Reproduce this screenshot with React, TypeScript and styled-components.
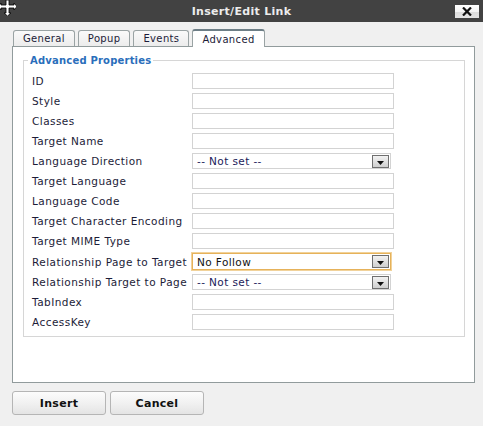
import React from "react";
import styled, { createGlobalStyle } from "styled-components";

const GlobalStyle = createGlobalStyle`
  html, body {
    margin: 0;
    padding: 0;
    background: #f0f0f0;
    font-family: "DejaVu Sans", Verdana, sans-serif;
  }
`;

const Window = styled.div`
  width: 483px;
  height: 426px;
  background: #f0f0f0;
  overflow: hidden;
`;

const TitleBar = styled.div`
  height: 22px;
  background: #424242;
  display: grid;
  grid-template-columns: 1fr auto 1fr;
  align-items: center;
`;

const MoveIcon = styled.div`
  display: flex;
  align-items: flex-start;
  height: 22px;
`;

const Title = styled.div`
  color: #ececec;
  font-weight: bold;
  font-size: 11px;
  letter-spacing: 0.3px;
`;

const CloseButton = styled.button`
  justify-self: end;
  margin-right: 4px;
  width: 24px;
  height: 13px;
  padding: 0;
  border: none;
  background: linear-gradient(#ffffff 0%, #f4f4f4 50%, #dcdcdc 51%, #e4e4e4 100%);
  display: flex;
  align-items: center;
  justify-content: center;
`;

const Body = styled.div`
  padding: 6px 8px 0 12px;
`;

const TabRow = styled.div`
  display: flex;
  align-items: flex-end;
  gap: 3px;
  padding-left: 1px;
  height: 18px;
`;

const Tab = styled.div<{ active?: boolean }>`
  height: ${(p) => (p.active ? "18px" : "16px")};
  padding: 0 9px;
  box-sizing: border-box;
  display: flex;
  align-items: center;
  font-size: 10px;
  letter-spacing: 0.35px;
  color: #1c1c38;
  background: ${(p) => (p.active ? "#ffffff" : "linear-gradient(#fafafa, #ececec)")};
  border: 1px solid #9aa3a4;
  border-bottom: none;
  border-top: ${(p) => (p.active ? "2px solid #6d7e86" : "1px solid #9aa3a4")};
  border-radius: 3px 3px 0 0;
  margin-bottom: ${(p) => (p.active ? "-1px" : "0")};
  position: relative;
`;

const Panel = styled.div`
  height: 337px;
  box-sizing: border-box;
  border: 1px solid #919b9c;
  background: #ffffff;
  padding: 8px 9px 0 10px;
`;

const Fieldset = styled.fieldset`
  margin: 0;
  padding: 7px 8px 6px 4px;
  border: 1px solid #d6d6d6;
`;

const Legend = styled.legend`
  padding: 0 2px;
  margin-left: 0;
  color: #2a6ebb;
  font-weight: bold;
  font-size: 10px;
  letter-spacing: 0.2px;
`;

const Rows = styled.div`
  display: grid;
  grid-template-columns: 160px 202px;
  row-gap: 4px;
  align-items: center;
  padding-left: 4px;
`;

const Label = styled.label`
  font-size: 10.5px;
  letter-spacing: 0.45px;
  color: #1c1c38;
  white-space: nowrap;
`;

const TextInput = styled.div`
  height: 16px;
  box-sizing: border-box;
  border: 1px solid #d3d3d3;
  background: #fff;
`;

const Select = styled.div<{ focused?: boolean }>`
  width: 199px;
  height: ${(p) => (p.focused ? "17px" : "16px")};
  box-sizing: border-box;
  border: 1px solid ${(p) => (p.focused ? "#e6b25a" : "#d3d3d3")};
  box-shadow: ${(p) => (p.focused ? "0 0 0 1px #f1d29a" : "none")};
  background: #fff;
  display: flex;
  align-items: center;
  justify-content: space-between;
  font-size: 10.5px;
  letter-spacing: 0.4px;
  padding-left: 4px;
`;

const SelectValue = styled.span<{ focused?: boolean }>`
  color: ${(p) => (p.focused ? "#111" : "#1a1a5a")};
`;

const Arrow = styled.div`
  width: 17px;
  height: 13px;
  box-sizing: border-box;
  border: 1px solid #6f6f6f;
  background: linear-gradient(#f2f2f2, #cfcfcf);
  display: flex;
  align-items: flex-end;
  justify-content: center;
  padding-bottom: 2px;
  margin-right: 1px;
`;

const ButtonRow = styled.div`
  display: flex;
  gap: 4px;
  margin-top: 8px;
`;

const Button = styled.button`
  width: 94px;
  height: 24px;
  border: 1px solid #b5b5b5;
  border-radius: 3px;
  background: linear-gradient(#fcfcfc 0%, #f1f1f1 50%, #e4e4e4 100%);
  font-family: "DejaVu Sans", Verdana, sans-serif;
  font-weight: bold;
  font-size: 11px;
  letter-spacing: 0.3px;
  color: #111;
  padding: 0;
`;

type Field = { label: string; kind: "text" | "select"; value?: string; focused?: boolean };

const fields: Field[] = [
  { label: "ID", kind: "text" },
  { label: "Style", kind: "text" },
  { label: "Classes", kind: "text" },
  { label: "Target Name", kind: "text" },
  { label: "Language Direction", kind: "select", value: "-- Not set --" },
  { label: "Target Language", kind: "text" },
  { label: "Language Code", kind: "text" },
  { label: "Target Character Encoding", kind: "text" },
  { label: "Target MIME Type", kind: "text" },
  { label: "Relationship Page to Target", kind: "select", value: "No Follow", focused: true },
  { label: "Relationship Target to Page", kind: "select", value: "-- Not set --" },
  { label: "TabIndex", kind: "text" },
  { label: "AccessKey", kind: "text" },
];

const tabs = ["General", "Popup", "Events", "Advanced"];

export default function App() {
  return (
    <Window>
      <GlobalStyle />
      <TitleBar>
        <MoveIcon>
          <svg width="16" height="16" viewBox="0 0 16 16">
            <path
              d="M6 0v5H1V3L-2 6.5 1 10V8h5v5H4l3.5 3L11 13H9V8h5v2l3-3.5L14 3v2H9V0z"
              fill="#fff"
              stroke="#000"
              strokeWidth="0.8"
            />
          </svg>
        </MoveIcon>
        <Title>Insert/Edit Link</Title>
        <CloseButton>
          <svg width="10" height="9" viewBox="0 0 10 9">
            <path d="M1 0.5l8 8M9 0.5l-8 8" stroke="#111" strokeWidth="2.2" />
          </svg>
        </CloseButton>
      </TitleBar>
      <Body>
        <TabRow>
          {tabs.map((t) => (
            <Tab key={t} active={t === "Advanced"}>
              {t}
            </Tab>
          ))}
        </TabRow>
        <Panel>
          <Fieldset>
            <Legend>Advanced Properties</Legend>
            <Rows>
              {fields.map((f) => (
                <React.Fragment key={f.label}>
                  <Label>{f.label}</Label>
                  {f.kind === "text" ? (
                    <TextInput />
                  ) : (
                    <Select focused={f.focused}>
                      <SelectValue focused={f.focused}>{f.value}</SelectValue>
                      <Arrow>
                        <svg width="7" height="4" viewBox="0 0 7 4">
                          <path d="M0 0h7L3.5 4z" fill="#111" />
                        </svg>
                      </Arrow>
                    </Select>
                  )}
                </React.Fragment>
              ))}
            </Rows>
          </Fieldset>
        </Panel>
        <ButtonRow>
          <Button>Insert</Button>
          <Button>Cancel</Button>
        </ButtonRow>
      </Body>
    </Window>
  );
}
